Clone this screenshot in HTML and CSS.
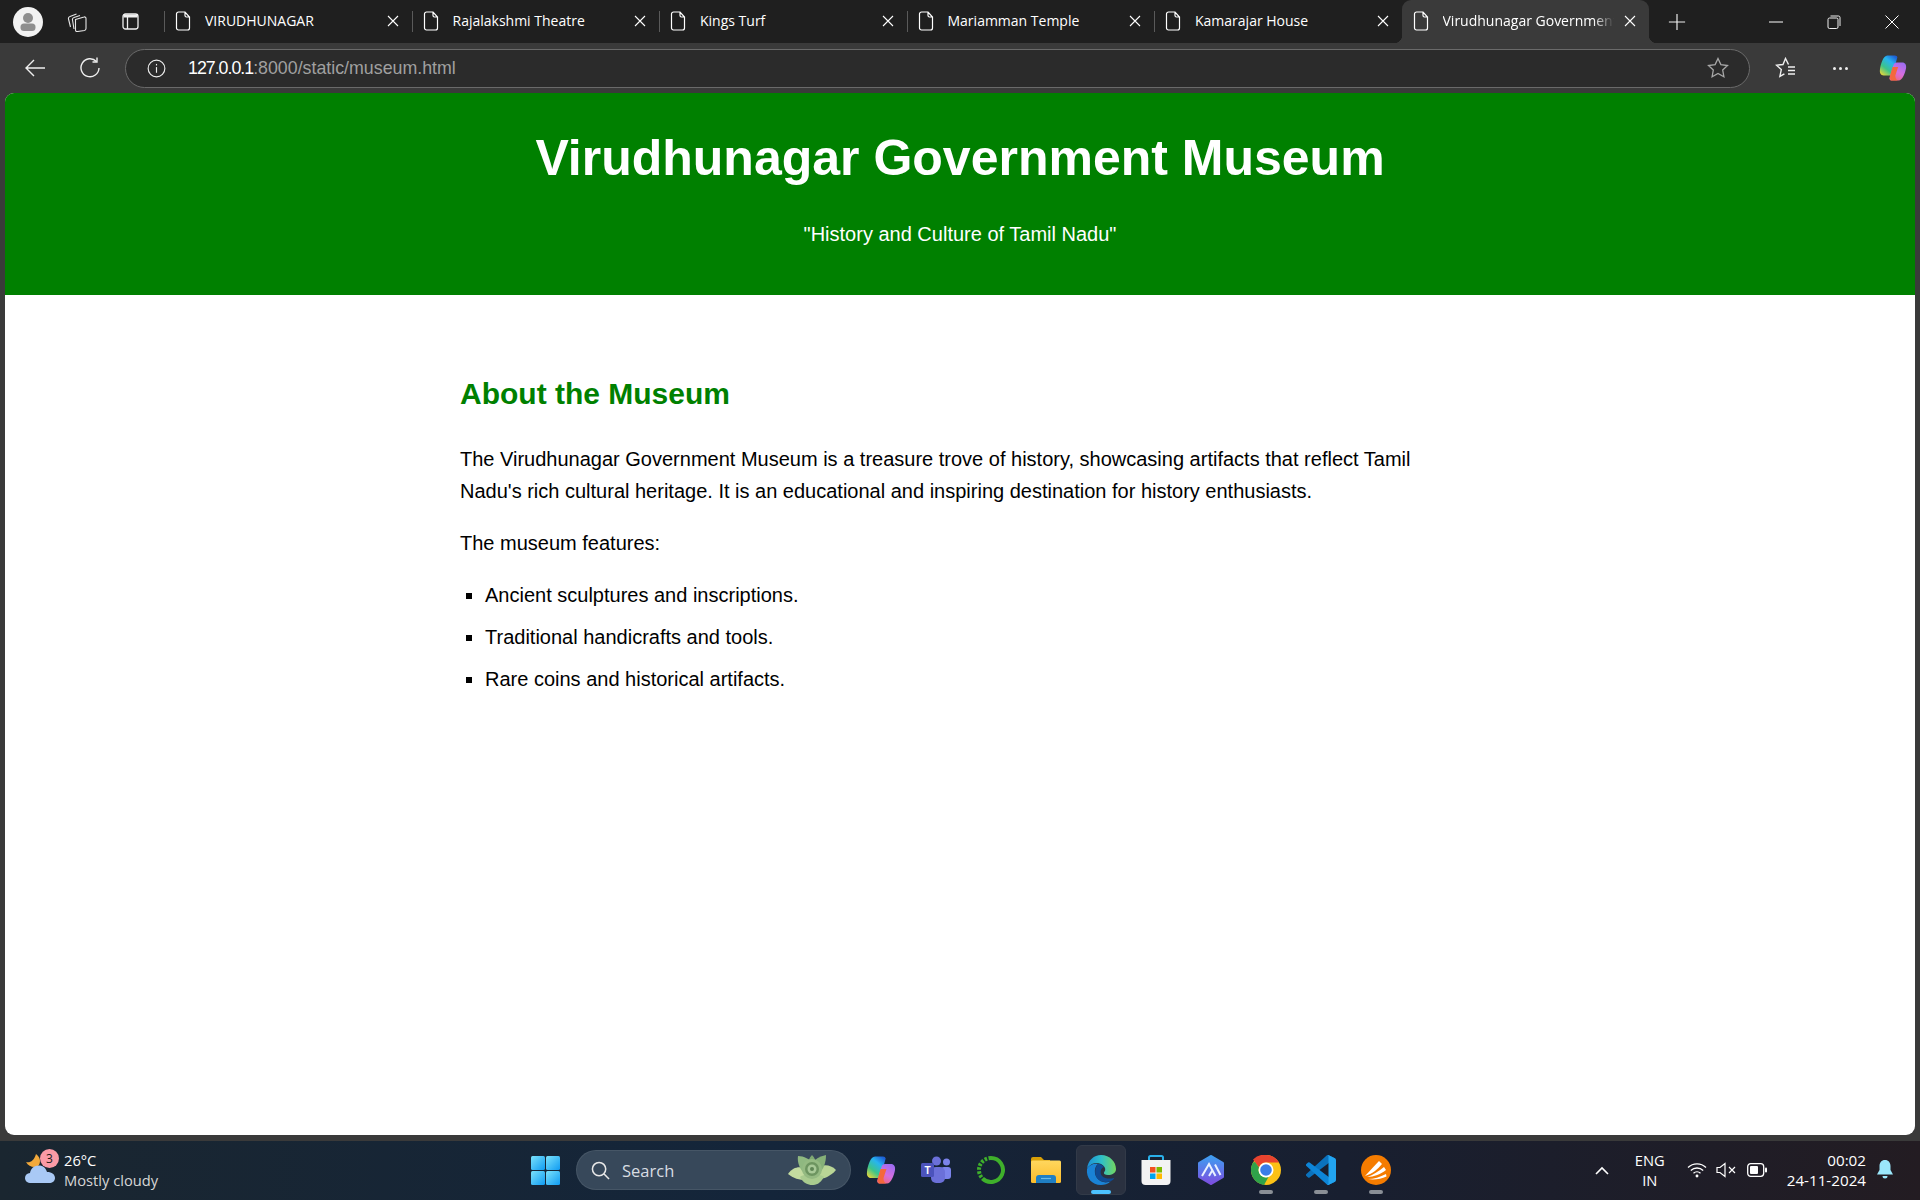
FILE: index.html
```html
<!DOCTYPE html>
<html lang="en">
<head>
    <meta charset="UTF-8">
    <meta name="viewport" content="width=device-width, initial-scale=1.0">
    <title>Virudhunagar Government Museum</title>
    <link rel="stylesheet" href="styles.css">
</head>
<body>

<svg class="defs" width="0" height="0">
    <defs>
        <symbol id="file" viewBox="0 0 16 20">
            <path d="M1.5 3a2 2 0 0 1 2-2H10l4.5 5v11a2 2 0 0 1-2 2h-9a2 2 0 0 1-2-2zM10 1v3.5a1.5 1.5 0 0 0 1.5 1.5h3" fill="none" stroke="#fff" stroke-width="1.2"/>
        </symbol>
        <symbol id="close" viewBox="0 0 12 12">
            <path d="M1 1l10 10M11 1L1 11" stroke="#fff" stroke-width="1.1" fill="none"/>
        </symbol>
        <linearGradient id="copA" x1=".8" y1="0" x2=".1" y2="1">
            <stop offset="0" stop-color="#1d5fd6"/>
            <stop offset=".3" stop-color="#27b4f0"/>
            <stop offset=".65" stop-color="#3cc48a"/>
            <stop offset="1" stop-color="#f0d635"/>
        </linearGradient>
        <linearGradient id="copB" x1=".8" y1="0" x2=".3" y2="1">
            <stop offset="0" stop-color="#9a6cf2"/>
            <stop offset=".55" stop-color="#d56ee0"/>
            <stop offset="1" stop-color="#f2657a"/>
        </linearGradient>
        <symbol id="copilot" viewBox="0 0 30 30">
            <path d="M9 1.500h8c1.500 0 2.300.8 2.700 2L15 20c-.6 2-1.900 3-3.500 3H5c-3 0-4.500-2.500-4-6C1.600 11 4.500 1.500 9 1.500z" fill="url(#copA)"/>
            <path d="M13 28.500h8c4 0 7-8 8-13.500.5-3.500-1-6-4-6h-6c-1.700 0-3 1-3.500 3L11 26c.4 1.300 1 2.500 2 2.500z" fill="url(#copB)"/>
            <path d="M17.500 23l3-9h-6l-2.500 9c-.3 1.800.2 4 1 5.500h7c-1.500-1-2.800-3.200-2.500-5.500z" fill="#f4683c"/>
        </symbol>
        <linearGradient id="winTile" x1="0" y1="0" x2="1" y2="1">
            <stop offset="0" stop-color="#7be2fb"/>
            <stop offset="1" stop-color="#0f9bf2"/>
        </linearGradient>
        <linearGradient id="edgeWave" x1="0" y1=".5" x2="1" y2=".5">
            <stop offset="0" stop-color="#1b8fd8"/>
            <stop offset=".5" stop-color="#2fc0c8"/>
            <stop offset="1" stop-color="#74d65e"/>
        </linearGradient>
        <linearGradient id="folderFill" x1="0" y1="0" x2="0" y2="1">
            <stop offset="0" stop-color="#ffd75e"/>
            <stop offset="1" stop-color="#fcbc2a"/>
        </linearGradient>
        <linearGradient id="hexFill" x1="0" y1="0" x2="0" y2="1">
            <stop offset="0" stop-color="#3f9df0"/>
            <stop offset="1" stop-color="#7b4fe0"/>
        </linearGradient>
    </defs>
</svg>

<div class="tabstrip">
    <div class="strip-tools">
        <svg class="avatar" viewBox="0 0 30 30">
            <circle cx="15" cy="15" r="15" fill="#f2f2f2"/>
            <circle cx="15" cy="11" r="5" fill="#8e8e8e"/>
            <rect x="7.500" y="16.500" width="15" height="7.500" rx="3.500" fill="#8e8e8e"/>
        </svg>
        <svg class="tool-collections" viewBox="0 0 20 20" fill="none" stroke="#e6e6e6" stroke-width="1.100">
            <path d="M8.500 7.500L17 5a1.500 1.500 0 0 1 2 1.500v10a2 2 0 0 1-1.500 2l-7 1a1.500 1.500 0 0 1-2-1.500z"/>
            <path d="M7 17L5.500 8A2 2 0 0 1 7 5.500L13 3.500"/>
            <path d="M3.500 15L1.500 7A2 2 0 0 1 3 4.500L9.500 2"/>
        </svg>
        <svg class="tool-vtabs" viewBox="0 0 17 17" fill="none" stroke="#f0f0f0" stroke-width="1.300">
            <rect x="1" y="1" width="15" height="15" rx="2.500"/>
            <path d="M1.500 3h14" stroke-width="3"/>
            <path d="M5.500 4v12"/>
        </svg>
    </div>
    <div class="tab"><svg class="tab-icon"><use href="#file"/></svg><span class="tab-title">VIRUDHUNAGAR</span><svg class="tab-close"><use href="#close"/></svg></div>
    <div class="tab"><svg class="tab-icon"><use href="#file"/></svg><span class="tab-title">Rajalakshmi Theatre</span><svg class="tab-close"><use href="#close"/></svg></div>
    <div class="tab"><svg class="tab-icon"><use href="#file"/></svg><span class="tab-title">Kings Turf</span><svg class="tab-close"><use href="#close"/></svg></div>
    <div class="tab"><svg class="tab-icon"><use href="#file"/></svg><span class="tab-title">Mariamman Temple</span><svg class="tab-close"><use href="#close"/></svg></div>
    <div class="tab"><svg class="tab-icon"><use href="#file"/></svg><span class="tab-title">Kamarajar House</span><svg class="tab-close"><use href="#close"/></svg></div>
    <div class="tab active"><svg class="tab-icon"><use href="#file"/></svg><span class="tab-title">Virudhunagar Government Museum</span><svg class="tab-close"><use href="#close"/></svg></div>
    <svg class="new-tab" viewBox="0 0 20 20"><path d="M10 1v18M1 10h18" stroke="#f0f0f0" stroke-width="1.300" fill="none"/></svg>
    <div class="window-controls">
        <svg viewBox="0 0 14 14"><path d="M0 7h14" stroke="#fff" stroke-width="1"/></svg>
        <svg viewBox="0 0 14 14" fill="none" stroke="#f0f0f0" stroke-width="1"><rect x="1" y="3" width="10" height="10.500" rx="1.500"/><path d="M3.500 1h8a1.500 1.500 0 0 1 1.500 1.500V11"/></svg>
        <svg viewBox="0 0 14 14"><path d="M.5.500l13 13M13.500.500l-13 13" stroke="#fff" stroke-width="1"/></svg>
    </div>
</div>

<div class="toolbar">
    <svg class="nav-icon" viewBox="0 0 22 22"><path d="M21 11H2M10 3l-8 8 8 8" fill="none" stroke="#eee" stroke-width="1.400"/></svg>
    <svg class="nav-icon reload" viewBox="0 0 22 22" fill="none" stroke="#eee" stroke-width="1.400"><path d="M17.500 4.500A9 9 0 1 0 20 11"/><path d="M18 .500v4.500h-4.500"/></svg>
    <div class="address">
        <svg class="info" viewBox="0 0 20 20" fill="none" stroke="#eee" stroke-width="1.200"><circle cx="10" cy="10" r="8.800"/><path d="M10 8.500v6"/><path d="M10 5.200v1.600"/></svg>
        <span class="url"><span class="url-host">127.0.0.1</span>:8000/static/museum.html</span>
        <svg class="star" viewBox="0 0 22 22"><path d="M11 1.500l2.900 6.100 6.600.9-4.800 4.600 1.200 6.600-5.900-3.200-5.900 3.200 1.200-6.600L1.500 8.500l6.600-.9z" fill="none" stroke="#a8a8a8" stroke-width="1.300"/></svg>
    </div>
    <svg class="fav" viewBox="0 0 22 22" fill="none" stroke="#f0f0f0" stroke-width="1.400"><path d="M13.500 7.500L10.500 1.500 8 7.500l-6.500.7 4.800 4.400-1.400 6.700 4.500-2.500"/><path d="M13 10h7M13 13.500h7M13 17h7"/></svg>
    <div class="dots"><i></i><i></i><i></i></div>
    <svg class="copilot-bar"><use href="#copilot"/></svg>
</div>

<div class="page">
    <header class="site-header">
        <h1>Virudhunagar Government Museum</h1>
        <p>"History and Culture of Tamil Nadu"</p>
    </header>
    <main class="content">
        <h2>About the Museum</h2>
        <p>The Virudhunagar Government Museum is a treasure trove of history, showcasing artifacts that reflect Tamil Nadu's rich cultural heritage. It is an educational and inspiring destination for history enthusiasts.</p>
        <p>The museum features:</p>
        <ul>
            <li>Ancient sculptures and inscriptions.</li>
            <li>Traditional handicrafts and tools.</li>
            <li>Rare coins and historical artifacts.</li>
        </ul>
    </main>
</div>

<div class="page-gap"></div>

<div class="taskbar">
    <div class="weather">
        <div class="weather-icon">
            <svg viewBox="0 0 30 30">
                <path d="M1 9c4 1 8-1 10-8 4 3 5 7 3 11-2 3-10 3-13-3z" fill="#f2a93b"/>
                <path d="M6 30c-3.500 0-6-2-6-5 0-2.800 2-4.600 5-4.900C5.800 15.500 8.800 12.500 14 12.500c4 0 7 2.700 8 6.500 5 0 8 2.600 8 6 0 3-2.500 5-6 5z" fill="#a9c9f5"/>
            </svg>
            <span class="badge">3</span>
        </div>
        <div class="weather-text">
            <span class="temp">26°C</span>
            <span class="cond">Mostly cloudy</span>
        </div>
    </div>

    <div class="task-icons">
        <div class="slot">
            <svg class="win" viewBox="0 0 29 29">
                <rect width="14" height="14" rx="1.500" fill="url(#winTile)"/>
                <rect x="15" width="14" height="14" rx="1.500" fill="url(#winTile)"/>
                <rect y="15" width="14" height="14" rx="1.500" fill="url(#winTile)"/>
                <rect x="15" y="15" width="14" height="14" rx="1.500" fill="url(#winTile)"/>
            </svg>
        </div>
        <div class="search">
            <svg class="search-icon" viewBox="0 0 20 20" fill="none" stroke="#e8e8e8" stroke-width="1.600"><circle cx="8.500" cy="8.500" r="7"/><path d="M13.500 13.500l5.500 5.500"/></svg>
            <span>Search</span>
            <svg class="succulent" viewBox="0 0 48 30">
                <path d="M0 19C6 11 13 11 20 15l2 10C14 26 6 24 0 19z" fill="#c4dca0"/>
                <path d="M48 15C42 9 34 9 28 14l-2 10C34 25 42 22 48 15z" fill="#b9d596"/>
                <path d="M10 1c6 0 12 3 15 8l-7 11C12 15 9 8 10 1z" fill="#8fb880"/>
                <path d="M38 0c0 7-2 14-8 20L23 9c4-5 9-8 15-9z" fill="#86b078"/>
                <path d="M24 0c3 3 4 6 4 10h-8c0-4 1-7 4-10z" fill="#7fa873"/>
                <path d="M12 22c4-4 20-4 24 0-4 7-8 8-12 8s-9-2-12-8z" fill="#a9cb8f"/>
                <circle cx="24" cy="14" r="10" fill="#94ba82"/>
                <circle cx="24" cy="14" r="7" fill="#6d9560"/>
                <circle cx="24" cy="14" r="4.500" fill="#a8c997"/>
                <circle cx="24" cy="14" r="2" fill="#5e8554"/>
            </svg>
        </div>
        <div class="slot"><svg class="task-icon"><use href="#copilot"/></svg></div>
        <div class="slot">
            <svg class="task-icon" viewBox="0 0 30 30">
                <circle cx="25.500" cy="7" r="3.500" fill="#7b83eb"/>
                <rect x="20" y="12" width="10" height="12" rx="3" fill="#7b83eb"/>
                <circle cx="15.500" cy="6" r="4.500" fill="#6b70d9"/>
                <rect x="10" y="12" width="14" height="16" rx="5" fill="#6b70d9"/>
                <rect y="8" width="13" height="14" rx="1.500" fill="#4b53bc"/>
                <text class="teams-t" x="6.500" y="19">T</text>
            </svg>
        </div>
        <div class="slot">
            <svg class="task-icon" viewBox="0 0 30 30">
                <path d="M15 3a12 12 0 1 1-8.500 20.500" fill="none" stroke="#3fb02b" stroke-width="4"/>
                <path d="M15 3A12 12 0 0 0 6.500 23.500" fill="none" stroke="#3fb02b" stroke-width="4" stroke-dasharray="2.500 1.500"/>
            </svg>
        </div>
        <div class="slot">
            <svg class="task-icon" viewBox="0 0 30 30">
                <path d="M0 4a2 2 0 0 1 2-2h8l3 3h6v5H0z" fill="#d9a007"/>
                <rect y="5.500" width="30" height="22.500" rx="1.500" fill="url(#folderFill)"/>
                <path d="M5 28v-5a3 3 0 0 1 3-3h14a3 3 0 0 1 3 3v5z" fill="#1f7fc4"/>
                <path d="M10 23.500h10" stroke="#6bbbe8" stroke-width="1.200"/>
            </svg>
        </div>
        <div class="slot current">
            <svg class="task-icon" viewBox="0 0 30 30">
                <path d="M1 14C2 5 8 0 15 0c9 0 15 7 15 14 0 4-4 6-8 6-3 0-4.500-1-4-2.500 1-1.500 2-3 .5-5.500C16 8 10 7 6 9c-2.500 1.500-4 3-5 5z" fill="url(#edgeWave)"/>
                <path d="M1 14c2-4 7-6 11-5-4 3-4 10-1 14 3 4 9 6 14 3-3 3-7 4-10 4C6 30 0 23 1 14z" fill="#1a83d6"/>
                <path d="M12 9c-3 3-4 10-1 14 3 4 9 5 14 3 2-1 3-2 3-3-4 1-9 1-12-2-2.500-3-1.500-8 2-9-2-2.500-4-3-6-3z" fill="#0f4b94"/>
            </svg>
            <i class="run-mark active-mark"></i>
        </div>
        <div class="slot">
            <svg class="task-icon" viewBox="0 0 30 30">
                <path d="M8 6V2.500A1.500 1.500 0 0 1 9.500 1h11A1.500 1.500 0 0 1 22 2.500V6" fill="none" stroke="#29b0ea" stroke-width="2"/>
                <path d="M.5 5h29v21a4 4 0 0 1-4 4h-21a4 4 0 0 1-4-4z" fill="#f3f3f3"/>
                <rect x="9" y="12" width="5.500" height="5.500" fill="#f25022"/>
                <rect x="15.500" y="12" width="5.500" height="5.500" fill="#7fba00"/>
                <rect x="9" y="18.500" width="5.500" height="5.500" fill="#00a4ef"/>
                <rect x="15.500" y="18.500" width="5.500" height="5.500" fill="#ffb900"/>
            </svg>
        </div>
        <div class="slot">
            <svg class="task-icon" viewBox="0 0 30 30">
                <path d="M15 1.500l11.500 6.800v13.400L15 28.500 3.500 21.700V8.300z" fill="url(#hexFill)" stroke="url(#hexFill)" stroke-width="3" stroke-linejoin="round"/>
                <path d="M6 21L13 9l6.500 12M13 21l3.500-6M19 9.500L24.500 20" fill="none" stroke="#eaf1ff" stroke-width="2"/>
            </svg>
        </div>
        <div class="slot">
            <svg class="task-icon" viewBox="0 0 30 30">
                <circle cx="15" cy="15" r="15" fill="#fbc116"/>
                <path d="M15 0a15 15 0 0 1 13 7.500H15a7.500 7.500 0 0 0-7 5L2 4.500A15 15 0 0 1 15 0z" fill="#e8432f"/>
                <path d="M2 7.500A15 15 0 0 0 13 29.900L17.500 22a7.500 7.500 0 0 1-9.500-9.500L4 7z" fill="#2fa24a"/>
                <circle cx="15" cy="15" r="7.500" fill="#fff"/>
                <circle cx="15" cy="15" r="5.800" fill="#3b7de8"/>
            </svg>
            <i class="run-mark"></i>
        </div>
        <div class="slot">
            <svg class="task-icon" viewBox="0 0 100 100">
                <path d="M96.460 10.800L75.860.870a6.230 6.230 0 0 0-7.110 1.210L1.300 63.580a4.170 4.170 0 0 0 0 6.160l5.510 5.010a4.170 4.170 0 0 0 5.320.24L93.360 13.370c2.730-2.070 6.640-.12 6.640 3.300v-.24c0-2.400-1.370-4.580-3.540-5.630z" fill="#0b72bd"/>
                <path d="M96.460 89.200l-20.600 9.920a6.230 6.230 0 0 1-7.110-1.210L1.300 36.420a4.170 4.170 0 0 1 0-6.160l5.510-5.010a4.170 4.170 0 0 1 5.320-.24l81.230 61.620c2.730 2.070 6.640.12 6.640-3.300v.24c0 2.400-1.370 4.580-3.540 5.630z" fill="#0d85d8"/>
                <path d="M75.860 99.130a6.230 6.230 0 0 1-7.110-1.210c2.300 2.300 6.240.67 6.240-2.580V4.660c0-3.250-3.940-4.880-6.240-2.580a6.230 6.230 0 0 1 7.110-1.210l20.600 9.900A6.250 6.250 0 0 1 100 16.400v67.200a6.250 6.250 0 0 1-3.540 5.630z" fill="#22a4f0"/>
            </svg>
            <i class="run-mark"></i>
        </div>
        <div class="slot">
            <svg class="task-icon" viewBox="0 0 30 30">
                <circle cx="15" cy="15" r="15" fill="#f57c00"/>
                <path d="M4 21L18 6l3 3c-4 5-10 10-17 12z" fill="#fff"/>
                <path d="M6 22c6-2 12-6 17-10l2 3c-5 4-12 7-19 7z" fill="#fff"/>
                <path d="M7 24c6 0 12-2 18-5l.5 2.500C20 24 13 25 7 24z" fill="#fff"/>
            </svg>
            <i class="run-mark"></i>
        </div>
    </div>

    <div class="tray">
        <svg class="chevron" viewBox="0 0 14 9"><path d="M1 8l6-6 6 6" fill="none" stroke="#fff" stroke-width="1.600"/></svg>
        <div class="lang"><span>ENG</span><span>IN</span></div>
        <svg class="wifi" viewBox="0 0 20 16" fill="none" stroke="#fff" stroke-width="1.300"><path d="M1 5.500a13 13 0 0 1 18 0M3.800 8.500a9 9 0 0 1 12.400 0M6.500 11.300a5 5 0 0 1 7 0"/><circle cx="10" cy="14" r=".8" fill="#fff"/></svg>
        <svg class="mute" viewBox="0 0 20 16" fill="none" stroke="#fff" stroke-width="1.200"><path d="M1 5.500h3L9 1.500v13L4 10.500H1z"/><path d="M13 5l6 6M19 5l-6 6"/></svg>
        <svg class="battery" viewBox="0 0 20 14"><rect x=".7" y=".7" width="16" height="12.600" rx="3" fill="none" stroke="#fff" stroke-width="1.300"/><rect x="3" y="3" width="8" height="8" rx="1" fill="#fff"/><rect x="18" y="4.500" width="2" height="5" rx="1" fill="#fff"/></svg>
        <div class="clock"><span>00:02</span><span>24-11-2024</span></div>
        <svg class="bell" viewBox="0 0 16 20"><path d="M8 0c3.500 0 5.500 2.700 5.500 6v4l2.500 4.500H0L2.500 10V6C2.500 2.700 4.500 0 8 0z" fill="#9be7fb"/><path d="M5.500 16h5a2.500 2.500 0 0 1-5 0z" fill="#9be7fb"/></svg>
    </div>
</div>

</body>
</html>
```

FILE: styles.css
```css
/* General Styling */
* {
    margin: 0;
    padding: 0;
    box-sizing: border-box;
}

html, body {
    height: 100%;
    overflow: hidden;
}

body {
    display: flex;
    flex-direction: column;
    background: #3a3a3a;
    font-family: "Liberation Sans", Arial, sans-serif;
}

.defs {
    position: absolute;
}

/* Tab strip */
.tabstrip {
    display: flex;
    align-items: center;
    flex: 0 0 43px;
    background: #1f1f1f;
}

.strip-tools {
    display: flex;
    align-items: center;
    flex: 0 0 164px;
    padding-left: 13px;
}

.avatar {
    width: 30px;
    height: 30px;
    margin-right: 24px;
}

.tool-collections {
    width: 20px;
    height: 20px;
    margin-right: 35px;
}

.tool-vtabs {
    width: 17px;
    height: 17px;
}

.tab {
    display: flex;
    align-items: center;
    flex: 0 0 247.5px;
    min-width: 0;
    height: 43px;
    padding: 0 13px 2px 11px;
    position: relative;
    color: #fff;
    font-family: "Open Sans", sans-serif;
    font-size: 14px;
}

.tab::before {
    content: "";
    position: absolute;
    left: 0;
    top: 11px;
    bottom: 11px;
    width: 1px;
    background: #5a5a5a;
}

.tab.active {
    flex-basis: 247px;
    background: #3a3a3a;
    border-radius: 9px 9px 0 0;
}

/* little flared corners at the foot of the open tab */
.tab.active::before,
.tab.active::after {
    content: "";
    position: absolute;
    top: auto;
    bottom: 0;
    width: 8px;
    height: 8px;
}

.tab.active::before {
    left: -8px;
    background: radial-gradient(circle at 0 0, transparent 8px, #3a3a3a 8.5px);
}

.tab.active::after {
    left: 100%;
    background: radial-gradient(circle at 100% 0, transparent 8px, #3a3a3a 8.5px);
}

.tab-icon {
    flex: none;
    width: 16px;
    height: 20px;
    margin-right: 14px;
}

.tab-title {
    flex: 1;
    overflow: hidden;
    white-space: nowrap;
}

.tab.active .tab-title {
    -webkit-mask-image: linear-gradient(90deg, #000 88%, transparent);
    mask-image: linear-gradient(90deg, #000 88%, transparent);
}

.tab-close {
    flex: none;
    width: 12px;
    height: 12px;
    margin-left: 10px;
}

.new-tab {
    width: 18px;
    height: 18px;
    margin-left: 19px;
}

.window-controls {
    display: flex;
    align-items: center;
    gap: 44px;
    margin-left: auto;
    padding-right: 21px;
}

.window-controls svg {
    width: 14px;
    height: 14px;
}

/* Toolbar */
.toolbar {
    display: flex;
    align-items: center;
    flex: 0 0 50px;
    padding-left: 24px;
}

.nav-icon {
    width: 22px;
    height: 22px;
    margin-right: 33px;
}

.nav-icon.reload {
    margin-right: 24px;
}

.address {
    display: flex;
    align-items: center;
    width: 1625px;
    height: 39px;
    margin-right: 25px;
    padding: 0 20px 0 21px;
    border: 1px solid #6a6a6a;
    border-radius: 20px;
    background: #2b2b2b;
    color: #a0a0a0;
    font-size: 17.800px;
}

.info {
    width: 19px;
    height: 19px;
    margin-right: 22px;
}

.url {
    flex: 1;
    white-space: nowrap;
}

.url-host {
    color: #fff;
    letter-spacing: -1px;
}

.star {
    width: 22px;
    height: 22px;
}

.fav {
    width: 22px;
    height: 22px;
    margin-right: 36px;
}

.dots {
    display: flex;
    gap: 3px;
    margin-right: 31px;
}

.dots i {
    width: 3px;
    height: 3px;
    border-radius: 50%;
    background: #eee;
}

.copilot-bar {
    width: 28px;
    height: 28px;
}

/* Page */
.page {
    flex: 0 0 1042px;
    margin: 0 5px;
    overflow: hidden;
    border-radius: 9px;
    background: #fff;
}

.site-header {
    height: 202px;
    padding-top: 35px;
    background: #008000;
    color: #fff;
    text-align: center;
}

.site-header h1 {
    font-size: 50px;
    line-height: 60px;
}

.site-header p {
    margin-top: 34px;
    font-size: 20px;
    line-height: 24px;
}

.content {
    width: 1000px;
    margin: 0 auto;
    padding-top: 80px;
    color: #000;
    font-size: 20px;
    line-height: 32px;
}

.content h2 {
    margin-bottom: 30px;
    color: #008000;
    font-size: 30px;
    line-height: 38px;
}

.content p {
    margin-bottom: 20px;
}

.content ul {
    padding-left: 25px;
    list-style: square;
}

.content li {
    margin-bottom: 10px;
}

.page-gap {
    flex: 0 0 6px;
}

/* Taskbar */
.taskbar {
    display: flex;
    align-items: center;
    justify-content: space-between;
    flex: 1;
    padding-bottom: 1px;
    background: linear-gradient(90deg, #1a2630 0%, #14253a 40%, #181f30 70%, #231c22 100%);
    color: #fff;
    font-family: "Open Sans", sans-serif;
    font-size: 14.700px;
}

.weather {
    display: flex;
    align-items: center;
    width: 521px;
    padding-left: 25px;
}

.weather-icon {
    position: relative;
    width: 30px;
    height: 30px;
    margin: 0 9px 4px 0;
}

.weather-icon svg {
    display: block;
    width: 30px;
    height: 30px;
}

.badge {
    position: absolute;
    left: 15px;
    top: -4px;
    width: 19px;
    height: 19px;
    border-radius: 50%;
    background: #fb9aa6;
    color: #1a1a1a;
    font-size: 12px;
    line-height: 19px;
    text-align: center;
}

.weather-text, .lang, .clock {
    display: flex;
    flex-direction: column;
    line-height: 20px;
}

.cond {
    color: #d6d6d6;
}

.task-icons {
    display: flex;
    align-items: center;
    gap: 5px;
}

.slot {
    display: flex;
    align-items: center;
    justify-content: center;
    position: relative;
    width: 50px;
    height: 50px;
    border-radius: 6px;
}

.slot.current {
    border: 1px solid #323a48;
    background: #2a3140;
}

.win {
    width: 29px;
    height: 29px;
    margin-right: 2px;
}

.task-icon {
    width: 30px;
    height: 30px;
}

.teams-t {
    fill: #fff;
    font-family: "Liberation Sans", sans-serif;
    font-size: 10px;
    font-weight: bold;
    text-anchor: middle;
}

.run-mark {
    position: absolute;
    left: 18px;
    bottom: 1px;
    width: 14px;
    height: 4px;
    border-radius: 2px;
    background: #8a8f96;
}

.active-mark {
    left: 14px;
    width: 20px;
    bottom: 0;
    background: #4cc2ff;
}

.search {
    display: flex;
    align-items: center;
    width: 275px;
    height: 40px;
    padding: 0 14px 0 14px;
    border: 1px solid rgba(255, 255, 255, 0.08);
    border-radius: 20px;
    background: #37485a;
    color: #d8dde2;
    font-size: 16.500px;
}

.search-icon {
    width: 19px;
    height: 19px;
    margin-right: 12px;
}

.search span {
    flex: 1;
}

.succulent {
    width: 48px;
    height: 30px;
}

.tray {
    display: flex;
    align-items: center;
    justify-content: flex-end;
    width: 519px;
    padding-right: 27px;
}

.chevron {
    width: 14px;
    height: 9px;
    margin-right: 25px;
}

.lang {
    align-items: center;
    width: 32px;
    margin-right: 21px;
}

.wifi {
    width: 20px;
    height: 16px;
    margin-right: 9px;
}

.mute {
    width: 20px;
    height: 16px;
    margin-right: 11px;
}

.battery {
    width: 20px;
    height: 14px;
    margin-right: 20px;
}

.clock {
    align-items: flex-end;
    margin-right: 11px;
    font-size: 15.200px;
}

.bell {
    width: 16px;
    height: 20px;
}
```
